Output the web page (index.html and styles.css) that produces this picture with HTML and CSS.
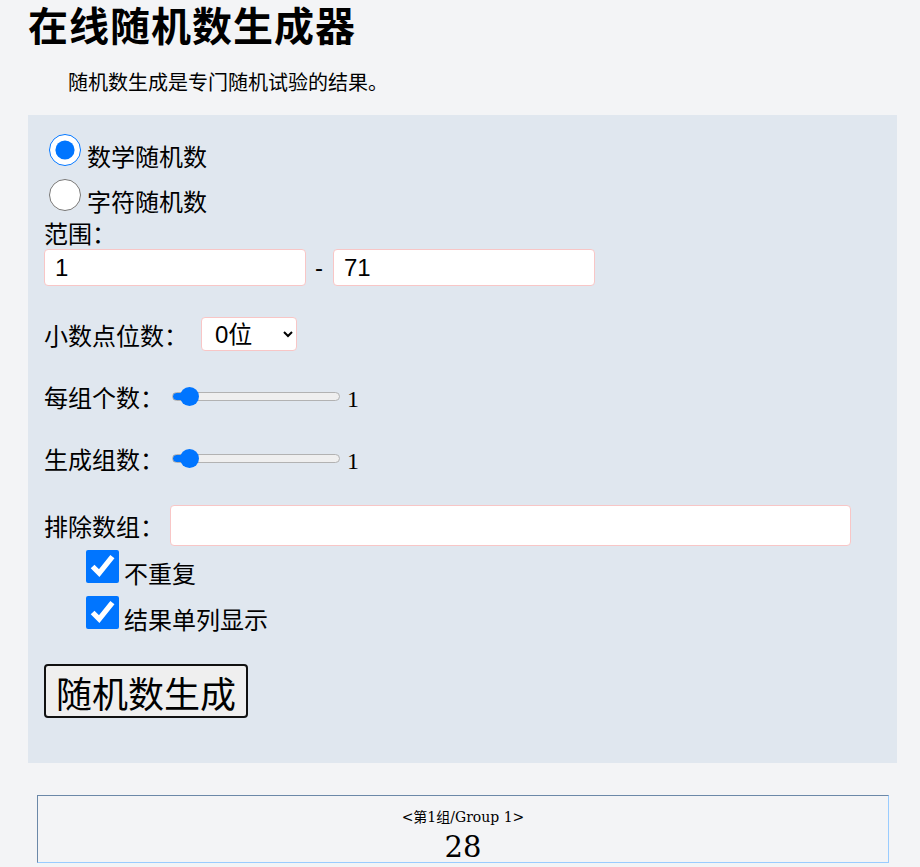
FILE: index.html
```html
<!DOCTYPE html>
<html lang="zh-CN">
<head>
  <meta charset="UTF-8">
  <meta name="viewport" content="width=device-width, initial-scale=1.0">
  <title>在线随机数生成器</title>
  <link rel="stylesheet" href="styles.css">
</head>
<body>

<div class="page">
  <h1 class="title">在线随机数生成器</h1>
  <p class="intro">随机数生成是专门随机试验的结果。</p>

  <form class="panel" onsubmit="return false">
    <!-- 类型 -->
    <label class="mode-item"><input type="radio" name="mode" checked>数学随机数</label>
    <label class="mode-item"><input type="radio" name="mode">字符随机数</label>

    <div class="field-label">范围：</div>
    <div class="range-inputs">
      <input type="text" class="text-input range-input" value="1">
      <span class="dash">-</span>
      <input type="text" class="text-input range-input" value="71">
    </div>

    <div class="row row-select">
      <label class="row-label">小数点位数：</label>
      <select class="digits">
        <option>0位</option>
        <option>1位</option>
        <option>2位</option>
        <option>3位</option>
      </select>
    </div>

    <div class="row row-slider">
      <label class="row-label">每组个数：</label>
      <input type="range" class="slider" min="1" max="100" value="1">
      <span class="slider-value">1</span>
    </div>

    <div class="row row-slider">
      <label class="row-label">生成组数：</label>
      <input type="range" class="slider" min="1" max="100" value="1">
      <span class="slider-value">1</span>
    </div>

    <div class="row row-exclude">
      <label class="row-label">排除数组：</label>
      <input type="text" class="text-input exclude-input">
    </div>

    <div class="options">
      <label class="check-item"><input type="checkbox" checked>不重复</label>
      <label class="check-item"><input type="checkbox" checked>结果单列显示</label>
    </div>

    <button type="button" class="generate">随机数生成</button>
  </form>

  <div class="results">
    <div class="group">
      <div class="group-title">&lt;第1组/Group 1&gt;</div>
      <div class="group-value">28</div>
    </div>
  </div>
</div>

</body>
</html>
```

FILE: styles.css
```css
body {
  margin: 0;
  padding: 0;
  font-family: "Liberation Serif", "Noto Sans CJK SC", serif;
  background-color: #f3f4f6;
  color: #000;
}

.page {
  padding: 0 23px 0 28px;
}

.title {
  margin: 4px 0 0;
  font-size: 40px;
  line-height: 48px;
  font-weight: 700;
  letter-spacing: 1px;
}

.intro {
  margin: 17px 0 18px;
  font-size: 20px;
  line-height: 28px;
  text-indent: 2em;
}

.panel {
  background-color: #e0e7ef;
  padding: 16px 16px 45px;
  font-size: 24px;
}

.mode-item {
  display: block;
  line-height: 36px;
}

.mode-item input {
  width: 32px;
  height: 32px;
  margin: 3px 6px 0 5px;
}

.field-label {
  line-height: 28px;
}

.range-inputs {
  display: flex;
  align-items: center;
}

.text-input {
  box-sizing: border-box;
  height: 37px;
  border: 1px solid #f8c6c6;
  border-radius: 4px;
  background-color: #fff;
  padding: 0 10px;
  font-family: "Liberation Sans", "Noto Sans CJK SC", sans-serif;
  font-size: 24px;
  outline: none;
}

.range-input {
  width: 262px;
}

.dash {
  margin: 0 10px 0 9px;
  font-family: "Liberation Sans", sans-serif;
}

.row {
  display: flex;
  align-items: center;
}

.row-label {
  white-space: nowrap;
}

.row-select {
  margin-top: 31px;
  height: 34px;
}

.digits {
  box-sizing: border-box;
  width: 96px;
  height: 34px;
  margin-left: 13px;
  padding: 0 4px 0 9px;
  border: 1px solid #f8c6c6;
  border-radius: 4px;
  background-color: #fff;
  font-family: "Liberation Sans", "Noto Sans CJK SC", sans-serif;
  font-size: 24px;
}

.row-slider {
  margin-top: 28px;
  height: 34px;
}

/* slider drawn a bit larger than the default one */
.slider {
  -webkit-appearance: none;
  appearance: none;
  box-sizing: border-box;
  width: 168px;
  height: 9px;
  margin: 0 0 0 8px;
  border: 1px solid #b2b2b2;
  border-radius: 5px;
  background: linear-gradient(to right, #0075ff 0, #0075ff 16px, #efefef 16px);
}

.slider::-webkit-slider-thumb {
  -webkit-appearance: none;
  appearance: none;
  width: 19px;
  height: 19px;
  border: none;
  border-radius: 50%;
  background-color: #0075ff;
  transform: translateX(7px);
}

.slider-value {
  margin-left: 7px;
  position: relative;
  top: 3px;
}

.row-exclude {
  margin-top: 30px;
  height: 41px;
}

.exclude-input {
  flex: 0 0 681px;
  height: 41px;
  margin-left: 6px;
}

.options {
  margin-top: 1px;
  padding-left: 38px;
}

.check-item {
  display: block;
  line-height: 36px;
}

.check-item input {
  width: 33px;
  height: 33px;
  margin: 3px 5px 3px 4px;
}

.generate {
  margin-top: 25px;
  padding: 0 10px;
  height: 54px;
  font-family: inherit;
  font-size: 36px;
  background-color: #efefef;
  border: 2px solid #111;
  border-radius: 4px;
  color: #000;
}

.results {
  margin-top: 32px;
  padding: 0 8px 0 9px;
}

.group {
  border-style: solid;
  border-width: 1px;
  border-color: #6b88a8 #99ccff #99ccff #6b88a8;
  text-align: center;
  padding: 11px 0 0;
  font-family: "DejaVu Serif", "Noto Sans CJK SC", serif;
}

.group-title {
  font-size: 14px;
  line-height: 20px;
  margin-bottom: 5px;
}

.group-value {
  font-size: 29px;
  line-height: 30px;
}
```
